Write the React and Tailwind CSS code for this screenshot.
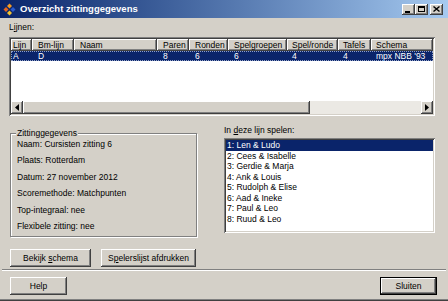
import React from "react";

const raised =
  "bg-[#d4d0c8] shadow-[inset_-1px_-1px_#404040,inset_1px_1px_#ffffff,inset_-2px_-2px_#808080,inset_2px_2px_#d4d0c8]";
const sunken =
  "shadow-[inset_1px_1px_#808080,inset_-1px_-1px_#ffffff,inset_2px_2px_#404040,inset_-2px_-2px_#d4d0c8]";
const headerCell =
  "shrink-0 h-full bg-[#d4d0c8] shadow-[inset_-1px_-1px_#404040,inset_1px_1px_#ffffff,inset_-2px_-2px_#808080] leading-[12px] truncate";

const columns = [
  { title: "Lijn", width: "w-[21px]", pad: "pl-[2px]", value: "A" },
  { title: "Bm-lijn", width: "w-[42px]", pad: "pl-[6px]", value: "D" },
  { title: "Naam", width: "w-[83px]", pad: "pl-[6px]", value: "" },
  { title: "Paren", width: "w-[32px]", pad: "pl-[6px]", value: "8" },
  { title: "Ronden", width: "w-[39px]", pad: "pl-[6px]", value: "6" },
  { title: "Spelgroepen", width: "w-[59px]", pad: "pl-[6px]", value: "6" },
  { title: "Spel/ronde", width: "w-[51px]", pad: "pl-[5px]", value: "4" },
  { title: "Tafels", width: "w-[33px]", pad: "pl-[5px]", value: "4" },
  { title: "Schema", width: "w-[62px]", pad: "pl-[5px]", value: "mpx NBB '93" },
];

const details = [
  "Naam: Cursisten zitting 6",
  "Plaats: Rotterdam",
  "Datum: 27 november 2012",
  "Scoremethode: Matchpunten",
  "Top-integraal: nee",
  "Flexibele zitting: nee",
];

const pairs = [
  "1: Len & Ludo",
  "2: Cees & Isabelle",
  "3: Gerdie & Marja",
  "4: Ank & Louis",
  "5: Rudolph & Elise",
  "6: Aad & Ineke",
  "7: Paul & Leo",
  "8: Ruud & Leo",
];

const AppIcon = () => (
  <svg width="13" height="13" viewBox="0 0 13 13">
    <path d="M6.5 0.5 L9 3 L6.5 5.5 L4 3 Z" fill="#f59a23" />
    <path d="M3 4 L5.5 6.5 L3 9 L0.5 6.5 Z" fill="#e8641b" />
    <path d="M10 4 L12.5 6.5 L10 9 L7.5 6.5 Z" fill="#2a5bd0" />
    <path d="M6.5 7.5 L9 10 L6.5 12.5 L4 10 Z" fill="#f2c230" />
  </svg>
);

const TitleButton = ({ children, className = "" }) => (
  <div
    className={`w-[13px] h-[11px] flex items-center justify-center ${raised} ${className}`}
  >
    {children}
  </div>
);

const Button = ({ children, className = "" }) => (
  <button
    className={`h-[18px] flex items-center justify-center text-[8.5px] ${raised} ${className}`}
  >
    <span>{children}</span>
  </button>
);

const Triangle = ({ dir }) => (
  <svg width="4" height="7" viewBox="0 0 4 7">
    {dir === "left" ? (
      <path d="M0 3.5 L4 0 L4 7 Z" fill="#000" />
    ) : (
      <path d="M4 3.5 L0 0 L0 7 Z" fill="#000" />
    )}
  </svg>
);

export default function App() {
  return (
    <div className="w-[448px] h-[301px] bg-[#d4d0c8] flex flex-col overflow-hidden font-['Liberation_Sans',Arial,sans-serif] text-[8.5px] text-black">
      {/* title bar */}
      <div className="h-[18px] shrink-0 flex items-center bg-linear-to-r from-[#0a246a] to-[#a6caf0]">
        <div className="ml-[3px]">
          <AppIcon />
        </div>
        <span className="ml-[4px] text-[9.5px] font-bold text-white">
          Overzicht zittinggegevens
        </span>
        <div className="ml-auto mr-[5px] flex items-center">
          <TitleButton>
            <div className="w-[5px] h-[2px] bg-black mt-[5px] -ml-[2px]" />
          </TitleButton>
          <TitleButton>
            <div className="w-[7px] h-[6px] border border-black border-t-2" />
          </TitleButton>
          <TitleButton className="ml-[2px]">
            <svg width="7" height="6" viewBox="0 0 7 6">
              <path d="M0.5 0.5 L6.5 5.5 M6.5 0.5 L0.5 5.5" stroke="#000" strokeWidth="1.4" />
            </svg>
          </TitleButton>
        </div>
      </div>

      {/* Lijnen */}
      <div className="ml-[9px] mt-[4px] h-[11px] leading-[11px]">
        L<span className="underline">i</span>jnen:
      </div>
      <div className={`ml-[9px] mt-[4px] w-[426px] h-[79px] p-[2px] bg-white ${sunken}`}>
        <div className="h-full flex flex-col">
          <div className="h-[12px] flex">
            {columns.map((c) => (
              <div key={c.title} className={`${headerCell} ${c.width} ${c.pad}`}>
                {c.title}
              </div>
            ))}
          </div>
          <div className="flex-1">
            <div className="h-[10px] flex bg-[#0a246a] text-white leading-[10px] outline outline-dotted outline-[#8fa0c8] -outline-offset-1">
              {columns.map((c) => (
                <div key={c.title} className={`shrink-0 ${c.width} ${c.pad}`}>
                  {c.value}
                </div>
              ))}
            </div>
          </div>
          <div className="h-[13px] flex bg-[#ebe9e4]">
            <div className={`w-[12px] flex items-center justify-center ${raised}`}>
              <Triangle dir="left" />
            </div>
            <div className={`w-[287px] ${raised}`} />
            <div className="flex-1" />
            <div className={`w-[12px] flex items-center justify-center ${raised}`}>
              <Triangle dir="right" />
            </div>
          </div>
        </div>
      </div>

      {/* middle */}
      <div className="mt-[9px] flex items-start">
        <div className="ml-[10px] mt-[8px] w-[187px] relative border border-[#808080] shadow-[inset_1px_1px_#ffffff,1px_1px_#ffffff] pl-[6px] pt-[2px] pb-[1px]">
          <div className="absolute -top-[6px] left-[5px] px-[1px] bg-[#d4d0c8] leading-[10px]">
            Zittinggegevens
          </div>
          {details.map((d) => (
            <div key={d} className="h-[16.5px] flex items-center">
              {d}
            </div>
          ))}
        </div>
        <div className="ml-[27px] flex flex-col">
          <div className="h-[10px] leading-[10px]">
            In <span className="underline">d</span>eze lijn spelen:
          </div>
          <div className={`mt-[3px] w-[211px] h-[95px] p-[2px] bg-white ${sunken}`}>
            {pairs.map((p, i) => (
              <div
                key={p}
                className={`h-[10.5px] leading-[10.5px] pl-[1px] ${
                  i === 0 ? "bg-[#0a246a] text-white" : ""
                }`}
              >
                {p}
              </div>
            ))}
          </div>
        </div>
      </div>

      {/* action buttons */}
      <div className="ml-[10px] mt-[12px] flex gap-[10px]">
        <Button className="w-[81px]">
          Bekijk <span className="underline">s</span>chema
        </Button>
        <Button className="w-[95px]">
          S<span className="underline">p</span>elerslijst afdrukken
        </Button>
      </div>

      <div className="mx-[2px] mt-[2px] h-[2px] border-t border-t-[#808080] border-b border-b-white" />

      <div className="mt-[6px] flex items-center">
        <Button className="ml-[10px] w-[57px]">Help</Button>
        <div className="ml-auto mr-[11px] w-[57px] h-[18px] border border-black">
          <button className={`w-full h-full flex items-center justify-center text-[8.5px] ${raised}`}>
            Sluiten
          </button>
        </div>
      </div>

      <div className="mt-auto h-[2px] border-t border-t-[#808080] border-b border-b-[#404040]" />
    </div>
  );
}
